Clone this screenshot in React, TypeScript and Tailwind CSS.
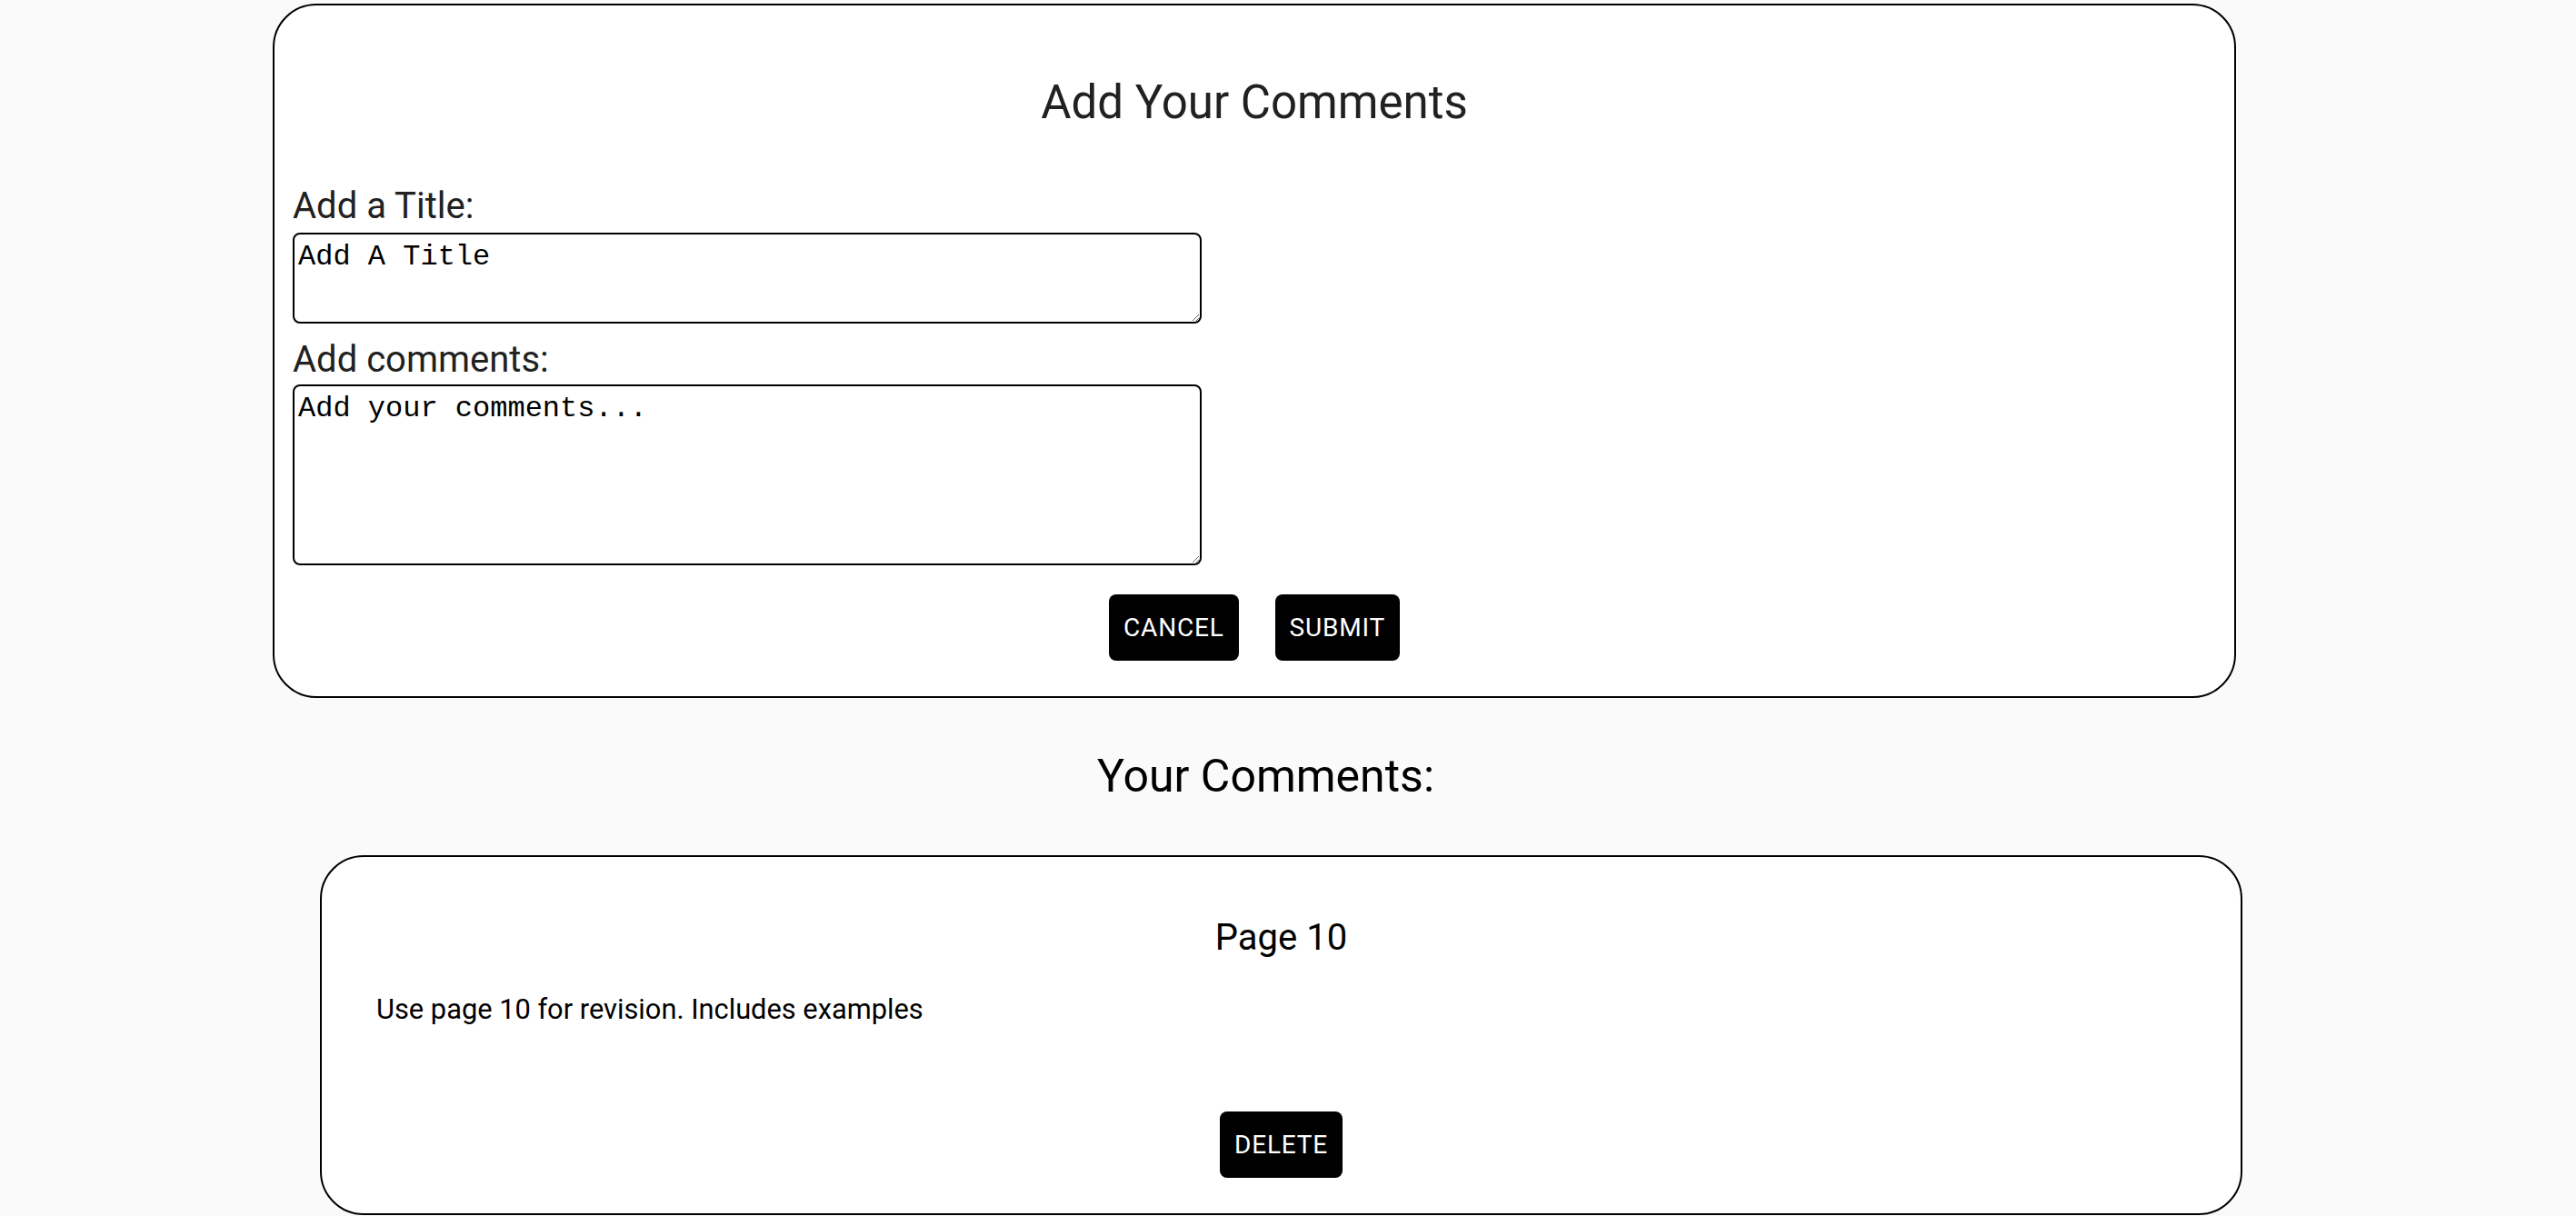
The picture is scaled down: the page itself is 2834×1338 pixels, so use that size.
import React from "react";

function Btn({ children }: { children: React.ReactNode }) {
  return (
    <button
      type="button"
      className="bg-black text-white rounded-[8px] px-[16px] py-[12px] text-[28px] leading-[49px] tracking-[0.8px] uppercase font-normal font-['Roboto',sans-serif]"
    >
      {children}
    </button>
  );
}

export default function App() {
  return (
    <div className="min-h-screen bg-[#fafafa] font-['Roboto',sans-serif] flex flex-col pt-[4px] pb-[40px]">
      <section className="ml-[300px] w-[2160px] h-[764px] box-border rounded-[48px] border-2 border-black bg-white px-[20px] pt-[81px] pb-[36px] flex flex-col shrink-0">
        <h1 className="text-center text-[51px] leading-none text-[#212121] font-normal">
          Add Your Comments
        </h1>
        <label className="mt-[69px] block text-[40px] leading-none text-[#212121]">Add a Title:</label>
        <textarea
          className="mt-[9px] w-[1000px] h-[100px] box-border border-2 border-black rounded-[8px] px-[4px] pt-[1px] pb-[4px] bg-white text-black text-[32px] leading-normal font-['Liberation_Mono','Courier_New',monospace] resize outline-none"
          defaultValue="Add A Title"
        />
        <label className="mt-[20px] block text-[40px] leading-none text-[#212121]">Add comments:</label>
        <textarea
          className="mt-[7px] w-[1000px] h-[199px] box-border border-2 border-black rounded-[8px] px-[4px] pt-[1px] pb-[4px] bg-white text-black text-[32px] leading-normal font-['Liberation_Mono','Courier_New',monospace] resize outline-none"
          defaultValue="Add your comments..."
        />
        <div className="mt-[32px] flex justify-center gap-[40px]">
          <Btn>Cancel</Btn>
          <Btn>Submit</Btn>
        </div>
      </section>

      <h2 className="ml-[300px] w-[2185px] mt-[61px] text-center text-[50px] leading-none text-black font-normal">
        Your Comments:
      </h2>

      <section className="ml-[352px] w-[2115px] mt-[62px] box-border rounded-[48px] border-2 border-black bg-white px-[60px] pt-[69px] pb-[39px] flex flex-col shrink-0">
        <h3 className="text-center text-[40px] leading-none text-black font-normal">Page 10</h3>
        <p className="mt-[44px] text-[30.8px] leading-none text-black">
          Use page 10 for revision. Includes examples
        </p>
        <div className="mt-[96px] flex justify-center">
          <Btn>Delete</Btn>
        </div>
      </section>
    </div>
  );
}
